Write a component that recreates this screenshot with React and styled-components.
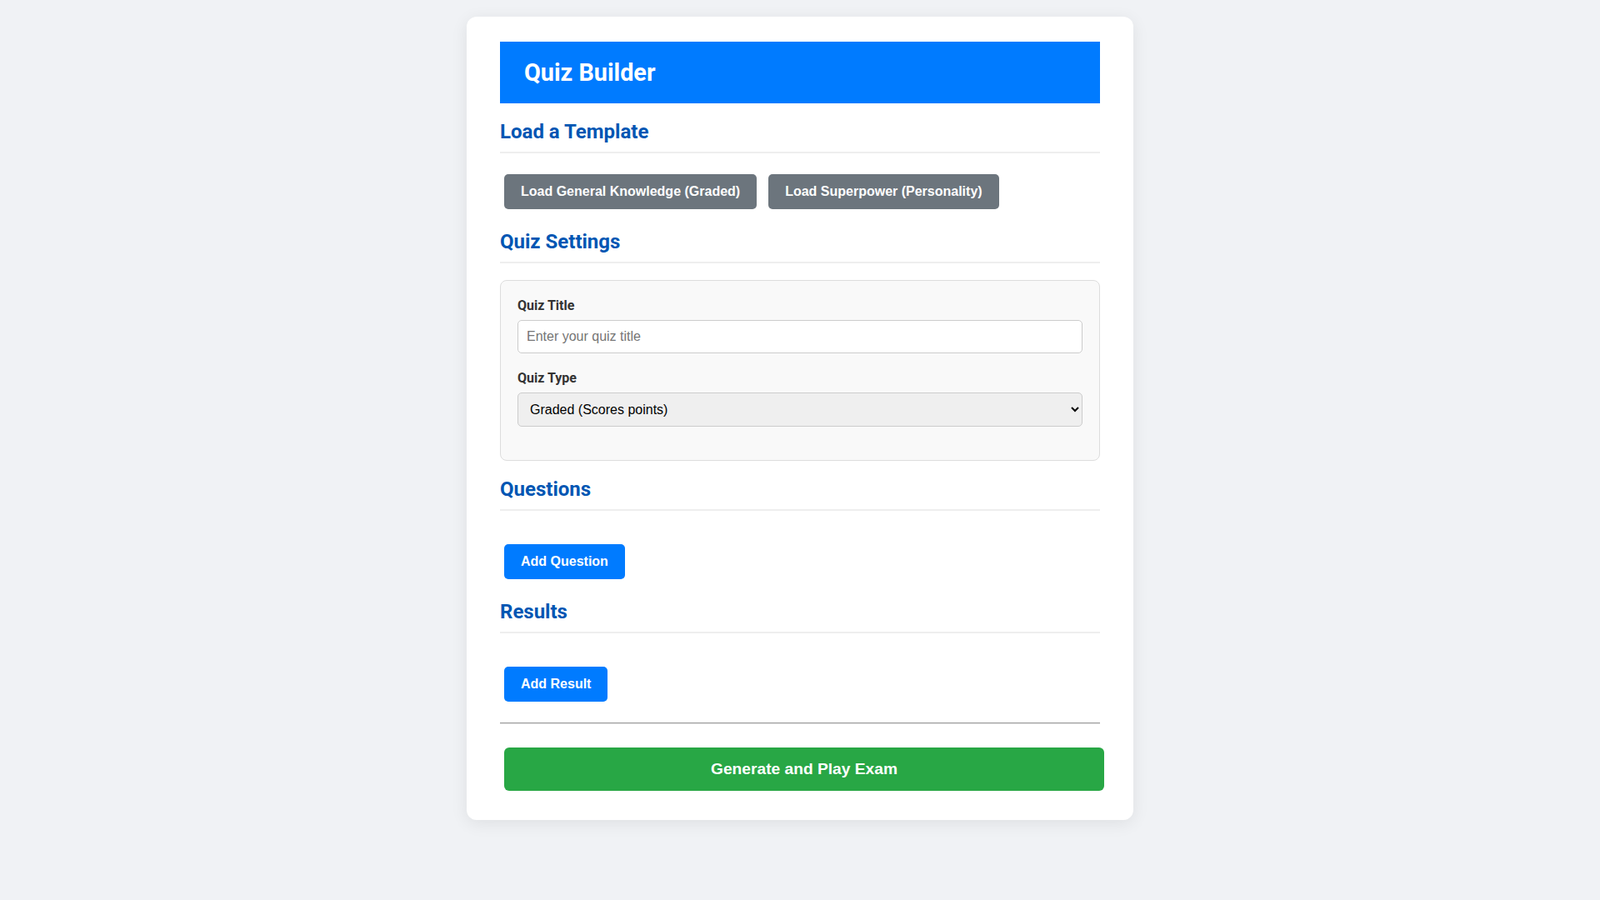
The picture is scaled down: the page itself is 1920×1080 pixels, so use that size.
import React, { useState } from 'react';
import styled, { createGlobalStyle } from 'styled-components';

const GlobalStyle = createGlobalStyle`
  * { box-sizing: border-box; }
  body {
    margin: 0;
    padding: 20px;
    background: #f0f2f5;
    font-family: Roboto, "Noto Sans", sans-serif;
    color: #333;
  }
`;

const Card = styled.div`
  max-width: 800px;
  margin: 0 auto;
  padding: 30px 40px;
  background: #fff;
  border-radius: 12px;
  box-shadow: 0 4px 20px rgba(0, 0, 0, 0.08);
`;

const Header = styled.header`
  background: #007bff;
  padding: 20px 29px;

  h1 {
    margin: 0;
    color: #fff;
    font-size: 28.8px;
    font-weight: 700;
  }
`;

const SectionTitle = styled.h2`
  margin: 20px 0;
  padding-bottom: 10px;
  border-bottom: 2px solid #eee;
  color: #0056b3;
  font-size: 24px;
  font-weight: 700;
`;

const Button = styled.button`
  display: inline-block;
  margin: 5px;
  padding: 12px 20px;
  border: none;
  border-radius: 5px;
  background: ${(p) => (p.$variant === 'secondary' ? '#6c757d' : '#007bff')};
  color: #fff;
  font-family: "Liberation Sans", Arial, sans-serif;
  font-size: 16px;
  font-weight: 700;
  cursor: pointer;
`;

const SubmitButton = styled(Button)`
  display: block;
  width: 100%;
  padding: 15px 20px;
  border-radius: 6px;
  background: #28a745;
  font-size: 19.2px;
`;

const SettingsBox = styled.div`
  padding: 20px;
  background: #f9f9f9;
  border: 1px solid #ddd;
  border-radius: 8px;
`;

const FormGroup = styled.div`
  margin-bottom: 20px;
`;

const Label = styled.label`
  display: block;
  margin-bottom: 8px;
  font-size: 16px;
  font-weight: 700;
  color: #333;
`;

const fieldStyles = `
  display: block;
  width: 100%;
  padding: 10px;
  border: 1px solid #ccc;
  border-radius: 5px;
  font-family: "Liberation Sans", Arial, sans-serif;
  font-size: 16px;
`;

const TextInput = styled.input`
  ${fieldStyles}
  background: #fff;
  color: #333;
  &::placeholder { color: #757575; }
`;

const Select = styled.select`
  ${fieldStyles}
  padding-right: 0;
  background-color: #efefef;
  color: #000;
`;

const List = styled.div`
  min-height: 15px;
`;

const Divider = styled.hr`
  margin: 20px 0 28px;
  border: none;
  border-top: 1px solid #9a9a9a;
  border-bottom: 1px solid #e6e6e6;
`;

export default function App() {
  const [title, setTitle] = useState('');
  const [type, setType] = useState('graded');
  const [questions, setQuestions] = useState([]);
  const [results, setResults] = useState([]);

  return (
    <>
      <GlobalStyle />
      <Card>
        <Header>
          <h1>Quiz Builder</h1>
        </Header>

        <SectionTitle>Load a Template</SectionTitle>
        <div>
          <Button $variant="secondary">Load General Knowledge (Graded)</Button>{' '}
          <Button $variant="secondary">Load Superpower (Personality)</Button>
        </div>

        <SectionTitle>Quiz Settings</SectionTitle>
        <SettingsBox>
          <FormGroup>
            <Label htmlFor="quiz-title">Quiz Title</Label>
            <TextInput
              id="quiz-title"
              placeholder="Enter your quiz title"
              value={title}
              onChange={(e) => setTitle(e.target.value)}
            />
          </FormGroup>
          <FormGroup>
            <Label htmlFor="quiz-type">Quiz Type</Label>
            <Select id="quiz-type" value={type} onChange={(e) => setType(e.target.value)}>
              <option value="graded">Graded (Scores points)</option>
              <option value="personality">Personality (Maps to results)</option>
            </Select>
          </FormGroup>
        </SettingsBox>

        <SectionTitle>Questions</SectionTitle>
        <List>{questions.map((q) => <div key={q}>{q}</div>)}</List>
        <Button onClick={() => setQuestions([...questions])}>Add Question</Button>

        <SectionTitle>Results</SectionTitle>
        <List>{results.map((r) => <div key={r}>{r}</div>)}</List>
        <Button onClick={() => setResults([...results])}>Add Result</Button>

        <Divider />
        <SubmitButton>Generate and Play Exam</SubmitButton>
      </Card>
    </>
  );
}
